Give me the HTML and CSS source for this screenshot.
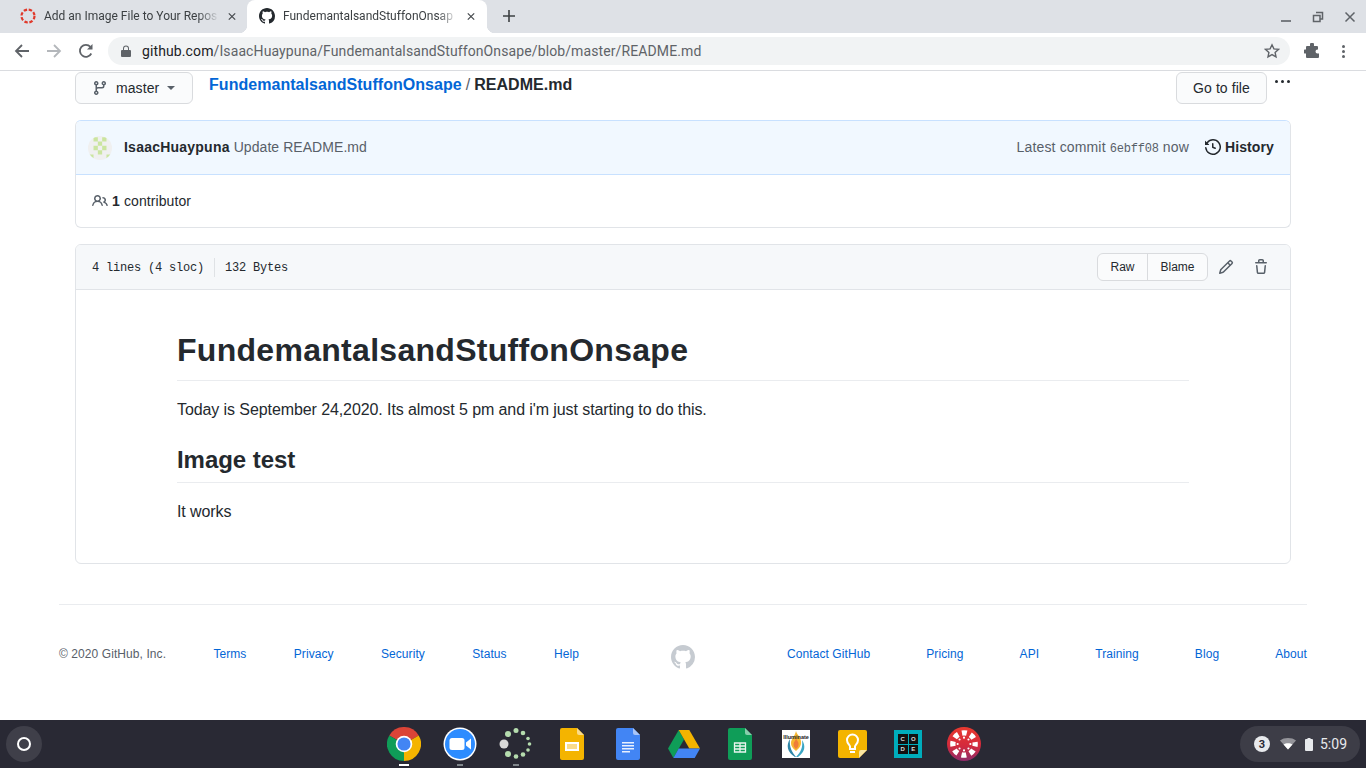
FILE: index.html
```html
<!DOCTYPE html>
<html lang="en">
<head>
    <meta charset="UTF-8">
    <title>FundemantalsandStuffonOnsape/README.md</title>
    <link rel="stylesheet" href="styles.css">
</head>
<body>
    <div class="tabstrip">
        <div class="tab">
            <svg class="favicon" viewBox="0 0 16 16"><circle cx="8" cy="8" r="6.5" fill="none" stroke="#e0392b" stroke-width="2.2" stroke-dasharray="3.4 1.7"/></svg>
            <span class="tab-title">Add an Image File to Your Repos</span>
            <svg class="tab-close" viewBox="0 0 10 10"><path d="M1 1l8 8M9 1l-8 8"/></svg>
        </div>
        <div class="tab tab-active">
            <svg class="favicon" viewBox="0 0 16 16"><path fill="#24292e" d="M8 0C3.58 0 0 3.58 0 8c0 3.54 2.29 6.53 5.47 7.59.4.07.55-.17.55-.38 0-.19-.01-.82-.01-1.49-2.01.37-2.53-.49-2.69-.94-.09-.23-.48-.94-.82-1.13-.28-.15-.68-.52-.01-.53.63-.01 1.08.58 1.23.82.72 1.21 1.87.87 2.33.66.07-.52.28-.87.51-1.07-1.78-.2-3.64-.89-3.64-3.95 0-.87.31-1.59.82-2.15-.08-.2-.36-1.02.08-2.12 0 0 .67-.21 2.2.82.64-.18 1.32-.27 2-.27.68 0 1.36.09 2 .27 1.53-1.04 2.2-.82 2.2-.82.44 1.1.16 1.92.08 2.12.51.56.82 1.27.82 2.15 0 3.07-1.87 3.75-3.65 3.95.29.25.54.73.54 1.48 0 1.07-.01 1.93-.01 2.2 0 .21.15.46.55.38A8.013 8.013 0 0016 8c0-4.42-3.58-8-8-8z"/></svg>
            <span class="tab-title">FundemantalsandStuffonOnsap</span>
            <svg class="tab-close" viewBox="0 0 10 10"><path d="M1 1l8 8M9 1l-8 8"/></svg>
        </div>
        <svg class="new-tab" viewBox="0 0 12 12"><path d="M6 0v12M0 6h12"/></svg>
        <div class="window-controls">
            <svg viewBox="0 0 12 12"><path d="M1 10h10" stroke-width="1.6"/></svg>
            <svg viewBox="0 0 12 12"><path d="M4 1.5h6.5V8H8M1.5 4.5H8V10.5H1.5Z" stroke-width="1.5"/></svg>
            <svg viewBox="0 0 12 12"><path d="M1.5 1.5l9 9M10.5 1.5l-9 9" stroke-width="1.5"/></svg>
        </div>
    </div>

    <div class="toolbar">
        <svg class="nav-icon" viewBox="0 0 16 16"><path d="M15 8H2M8 2L2 8l6 6" fill="none" stroke="#5f6368" stroke-width="1.8"/></svg>
        <svg class="nav-icon" viewBox="0 0 16 16"><path d="M1 8h13M8 2l6 6-6 6" fill="none" stroke="#b4b7bb" stroke-width="1.8"/></svg>
        <svg class="nav-icon" viewBox="0 0 16 16"><path d="M13.3 10.5A6 6 0 1 1 12.4 3.8" fill="none" stroke="#5f6368" stroke-width="1.8"/><path d="M14.5 1v5.5H9z" fill="#5f6368"/></svg>
        <div class="omnibox">
            <svg class="lock" viewBox="0 0 10 12"><path fill="#5f6368" d="M1 5h1V3.5a3 3 0 0 1 6 0V5h1a1 1 0 0 1 1 1v5a1 1 0 0 1-1 1H1a1 1 0 0 1-1-1V6a1 1 0 0 1 1-1zm2 0h4V3.5a2 2 0 0 0-4 0z"/></svg>
            <span class="url"><span class="url-host">github.com</span>/IsaacHuaypuna/FundemantalsandStuffonOnsape/blob/master/README.md</span>
            <svg class="star" viewBox="0 0 16 16"><path d="M8 1.8l1.9 4.1 4.5.5-3.3 3 .9 4.4L8 11.6l-4 2.2.9-4.4-3.3-3 4.5-.5z" fill="none" stroke="#5f6368" stroke-width="1.4"/></svg>
        </div>
        <svg class="ext" viewBox="0 0 16 16"><path fill="#5f6368" d="M6 1.5a2 2 0 0 1 4 0V3h3a1 1 0 0 1 1 1v2.5h-.5a2 2 0 0 0 0 4H15V14a1 1 0 0 1-1 1H3a1 1 0 0 1-1-1v-3.5H1a2 2 0 0 1 0-4h1V4a1 1 0 0 1 1-1h3z"/></svg>
        <div class="kebab"><i></i><i></i><i></i></div>
    </div>

    <main class="page">
        <div class="file-nav">
            <button class="btn branch-btn">
                <svg class="octicon" viewBox="0 0 16 16"><path fill-rule="evenodd" d="M11.75 2.5a.75.75 0 100 1.5.75.75 0 000-1.5zm-2.25.75a2.25 2.25 0 113 2.122V6A2.5 2.5 0 0110 8.5H6a1 1 0 00-1 1v1.128a2.251 2.251 0 11-1.5 0V5.372a2.25 2.25 0 111.5 0v1.836A2.492 2.492 0 016 7h4a1 1 0 001-1v-.628A2.25 2.25 0 019.5 3.25zM4.25 12a.75.75 0 100 1.5.75.75 0 000-1.5zM3.5 3.25a.75.75 0 111.5 0 .75.75 0 01-1.5 0z"/></svg>
                <span>master</span>
                <i class="caret"></i>
            </button>
            <div class="breadcrumb"><a href="#">FundemantalsandStuffonOnsape</a><span class="sep">/</span><strong>README.md</strong></div>
            <button class="btn goto-btn">Go to file</button>
            <div class="more-dots"><i></i><i></i><i></i></div>
        </div>

        <section class="commit-box">
            <div class="commit-head">
                <svg class="avatar" viewBox="0 0 10 10">
                    <rect width="10" height="10" fill="#f0f0f0"/>
                    <path fill="#cbe5a0" d="M2.3.5h1.8v1.8H2.3zM5.9.5h1.8v1.8H5.9zM4.1 2.3h1.8v1.8H4.1zM2.3 4.1h1.8v1.8H2.3zM5.9 4.1h1.8v1.8H5.9zM4.1 5.9h1.8v1.8H4.1zM.5 7.7h1.8v1.8H.5zM7.7 7.7h1.8v1.8H7.7z"/>
                </svg>
                <span class="commit-author">IsaacHuaypuna</span>
                <span class="commit-msg">Update README.md</span>
                <span class="commit-meta">Latest commit <code>6ebff08</code> now</span>
                <span class="history">
                    <svg class="octicon" viewBox="0 0 16 16"><path fill-rule="evenodd" d="M1.643 3.143L.427 1.927A.25.25 0 000 2.104V5.75c0 .138.112.25.25.25h3.646a.25.25 0 00.177-.427L2.715 4.215a6.5 6.5 0 11-1.18 4.458.75.75 0 10-1.493.154 8.001 8.001 0 101.6-5.684zM7.75 4a.75.75 0 01.75.75v2.992l2.028.812a.75.75 0 01-.557 1.392l-2.5-1A.75.75 0 017 8.25v-3.5A.75.75 0 017.75 4z"/></svg>
                    History
                </span>
            </div>
            <div class="contributors">
                <svg class="octicon" viewBox="0 0 16 16"><path fill-rule="evenodd" d="M5.5 3.5a2 2 0 100 4 2 2 0 000-4zM2 5.5a3.5 3.5 0 115.898 2.549 5.507 5.507 0 013.034 4.084.75.75 0 11-1.482.235 4.001 4.001 0 00-7.9 0 .75.75 0 01-1.482-.236A5.507 5.507 0 013.102 8.05 3.49 3.49 0 012 5.5zM11 4a.75.75 0 100 1.5 1.5 1.5 0 01.666 2.844.75.75 0 00-.416.672v.352a.75.75 0 00.574.73c1.2.289 2.162 1.2 2.522 2.372a.75.75 0 101.434-.44 5.01 5.01 0 00-2.56-3.012A3 3 0 0011 4z"/></svg>
                <strong>1</strong> contributor
            </div>
        </section>

        <section class="blob-box">
            <div class="blob-head">
                <span class="blob-info">4 lines (4 sloc)</span>
                <span class="blob-info blob-size">132 Bytes</span>
                <div class="btn-group">
                    <button class="btn-small btn-raw">Raw</button>
                    <button class="btn-small btn-blame">Blame</button>
                </div>
                <svg class="octicon edit-icon" viewBox="0 0 16 16"><path fill-rule="evenodd" d="M11.013 1.427a1.75 1.75 0 012.474 0l1.086 1.086a1.75 1.75 0 010 2.474l-8.61 8.61c-.21.21-.47.364-.756.445l-3.251.93a.75.75 0 01-.927-.928l.929-3.25a1.75 1.75 0 01.445-.758l8.61-8.61zm1.414 1.06a.25.25 0 00-.354 0L10.811 3.75l1.439 1.44 1.263-1.263a.25.25 0 000-.354l-1.086-1.086zM11.189 6.25L9.75 4.81l-6.286 6.287a.25.25 0 00-.064.108l-.558 1.953 1.953-.558a.249.249 0 00.108-.064l6.286-6.286z"/></svg>
                <svg class="octicon trash-icon" viewBox="0 0 16 16"><path fill-rule="evenodd" d="M6.5 1.75a.25.25 0 01.25-.25h2.5a.25.25 0 01.25.25V3h-3V1.75zm4.5 0V3h2.25a.75.75 0 010 1.5H2.75a.75.75 0 010-1.5H5V1.75C5 .784 5.784 0 6.75 0h2.5C10.216 0 11 .784 11 1.75zM4.496 6.675a.75.75 0 10-1.492.15l.66 6.6A1.75 1.75 0 005.405 15h5.19c.9 0 1.652-.681 1.741-1.576l.66-6.6a.75.75 0 00-1.492-.149l-.66 6.6a.25.25 0 01-.249.225h-5.19a.25.25 0 01-.249-.225l-.66-6.6z"/></svg>
            </div>
            <article class="markdown">
                <h1>FundemantalsandStuffonOnsape</h1>
                <p>Today is September 24,2020. Its almost 5 pm and i'm just starting to do this.</p>
                <h2>Image test</h2>
                <p>It works</p>
            </article>
        </section>

        <footer class="site-footer">
            <div class="footer-links">
                <span>© 2020 GitHub, Inc.</span>
                <a href="#">Terms</a>
                <a href="#">Privacy</a>
                <a href="#">Security</a>
                <a href="#">Status</a>
                <a href="#">Help</a>
            </div>
            <svg class="footer-logo" viewBox="0 0 16 16"><path fill="#c6cbd1" d="M8 0C3.58 0 0 3.58 0 8c0 3.54 2.29 6.53 5.47 7.59.4.07.55-.17.55-.38 0-.19-.01-.82-.01-1.49-2.01.37-2.53-.49-2.69-.94-.09-.23-.48-.94-.82-1.13-.28-.15-.68-.52-.01-.53.63-.01 1.08.58 1.23.82.72 1.21 1.87.87 2.33.66.07-.52.28-.87.51-1.07-1.78-.2-3.64-.89-3.64-3.95 0-.87.31-1.59.82-2.15-.08-.2-.36-1.02.08-2.12 0 0 .67-.21 2.2.82.64-.18 1.32-.27 2-.27.68 0 1.36.09 2 .27 1.53-1.04 2.2-.82 2.2-.82.44 1.1.16 1.92.08 2.12.51.56.82 1.27.82 2.15 0 3.07-1.87 3.75-3.65 3.95.29.25.54.73.54 1.48 0 1.07-.01 1.93-.01 2.2 0 .21.15.46.55.38A8.013 8.013 0 0016 8c0-4.42-3.58-8-8-8z"/></svg>
            <div class="footer-links">
                <a href="#">Contact GitHub</a>
                <a href="#">Pricing</a>
                <a href="#">API</a>
                <a href="#">Training</a>
                <a href="#">Blog</a>
                <a href="#">About</a>
            </div>
        </footer>
    </main>

    <div class="shelf">
        <div class="launcher"><i></i></div>
        <div class="shelf-apps">
            <div class="app app-open">
                <svg viewBox="0 0 32 32" class="ic-34">
                    <path fill="#db4437" d="M16 16L2.14 8A16 16 0 0 1 29.86 8Z"/>
                    <path fill="#f4b400" d="M16 16L29.86 8A16 16 0 0 1 16 32Z"/>
                    <path fill="#0f9d58" d="M16 16L16 32A16 16 0 0 1 2.14 8Z"/>
                    <circle cx="16" cy="16" r="7.8" fill="#fff"/>
                    <circle cx="16" cy="16" r="6.2" fill="#4285f4"/>
                </svg>
            </div>
            <div class="app app-running">
                <svg viewBox="0 0 34 34" class="ic-34">
                    <circle cx="17" cy="17" r="16.5" fill="#fff"/>
                    <circle cx="17" cy="17" r="15" fill="#2d8cff"/>
                    <rect x="6.5" y="11" width="15" height="12" rx="2.5" fill="#fff"/>
                    <path fill="#fff" d="M23 15.5l5-4v11l-5-4z"/>
                </svg>
            </div>
            <div class="app app-running">
                <svg viewBox="0 0 34 34" class="ic-34">
                    <circle cx="5" cy="17" r="4.5" fill="#d8d8d8"/>
                    <circle cx="9" cy="7" r="3" fill="#b5dcae"/><circle cx="17" cy="3.5" r="2.5" fill="#b5dcae"/>
                    <circle cx="24" cy="6" r="2.3" fill="#b5dcae"/><circle cx="29" cy="11.5" r="1.8" fill="#b5dcae"/>
                    <circle cx="30.5" cy="17" r="1.8" fill="#b5dcae"/><circle cx="29" cy="23" r="1.8" fill="#b5dcae"/>
                    <circle cx="24" cy="27.5" r="2.3" fill="#b5dcae"/><circle cx="17" cy="29.5" r="2.3" fill="#b5dcae"/>
                    <circle cx="9" cy="27" r="3" fill="#b5dcae"/>
                </svg>
            </div>
            <div class="app">
                <svg viewBox="0 0 24 32" class="ic-doc">
                    <path fill="#f4b400" d="M2 0h15l7 7v23a2 2 0 0 1-2 2H2a2 2 0 0 1-2-2V2a2 2 0 0 1 2-2z"/>
                    <path fill="#fadb8a" d="M17 0l7 7h-5a2 2 0 0 1-2-2z"/>
                    <path fill="#fadb8a" stroke="#fff" stroke-width="2" d="M6 15h12v7H6z"/>
                </svg>
            </div>
            <div class="app">
                <svg viewBox="0 0 24 32" class="ic-doc">
                    <path fill="#4285f4" d="M2 0h15l7 7v23a2 2 0 0 1-2 2H2a2 2 0 0 1-2-2V2a2 2 0 0 1 2-2z"/>
                    <path fill="#a9c5f8" d="M17 0l7 7h-5a2 2 0 0 1-2-2z"/>
                    <path fill="#e8f0fe" d="M6 14h12v1.5H6zM6 17h12v1.5H6zM6 20h12v1.5H6zM6 23h8v1.5H6z"/>
                </svg>
            </div>
            <div class="app">
                <svg viewBox="0 0 32 28" class="ic-drive">
                    <path fill="#0f9d58" d="M10.7 0L0 18.5 5.4 28 16 9.5z"/>
                    <path fill="#f4b400" d="M10.7 0h10.6L32 18.5H21.3z"/>
                    <path fill="#4285f4" d="M5.4 28L10.7 18.5H32L26.7 28z"/>
                </svg>
            </div>
            <div class="app">
                <svg viewBox="0 0 24 32" class="ic-doc">
                    <path fill="#0f9d58" d="M2 0h15l7 7v23a2 2 0 0 1-2 2H2a2 2 0 0 1-2-2V2a2 2 0 0 1 2-2z"/>
                    <path fill="#87ceac" d="M17 0l7 7h-5a2 2 0 0 1-2-2z"/>
                    <path fill="none" stroke="#e8f5ee" stroke-width="1.3" d="M6.5 15h11v9h-11zM6.5 18h11M6.5 21h11M12 15v9"/>
                </svg>
            </div>
            <div class="app">
                <div class="illuminate">
                    <svg viewBox="0 0 28 28">
                        <path fill="#f7b733" d="M14 1c1 4 6 7 5 13-.5 3-3 5-5 7-2-2-5-4-5-8 0-4 4-7 5-12z"/>
                        <path fill="#ef7d3a" d="M14 8c1 3 3 4 2.5 7-.3 2-1.5 3-2.5 4-1-1-2.5-2-2.5-4.5 0-2.5 2-3.5 2.5-6.5z"/>
                        <path fill="#2f86a8" d="M8 9c-4 6-3 13 5 18h1c-4-5-7-10-6-18z"/>
                        <path fill="#3aa6c4" d="M20 10c4 6 3 12-4 17h-2c5-5 7-10 6-17z"/>
                    </svg>
                    <span>Illuminate</span>
                </div>
            </div>
            <div class="app">
                <svg viewBox="0 0 29 28" class="ic-keep">
                    <path fill="#f4b400" d="M2 0h25a2 2 0 0 1 2 2v18l-8 8H2a2 2 0 0 1-2-2V2a2 2 0 0 1 2-2z"/>
                    <path fill="#fbe6a2" d="M29 20h-6a2 2 0 0 0-2 2v6z"/>
                    <path fill="none" stroke="#fff" stroke-width="2" d="M12 19v-2.5c0-1.5-3-3-3-6.5a5.5 5.5 0 0 1 11 0c0 3.5-3 5-3 6.5V19zM12 22h5"/>
                </svg>
            </div>
            <div class="app">
                <div class="code-logo"><span>C</span><span>O</span><span>D</span><span>E</span></div>
            </div>
            <div class="app">
                <svg viewBox="0 0 32 32" class="ic-34">
                    <defs><linearGradient id="canvas-grad" x1="0" y1="0" x2="0" y2="1"><stop offset="0" stop-color="#e8392f"/><stop offset="0.55" stop-color="#d42a3c"/><stop offset="1" stop-color="#8e2a6a"/></linearGradient></defs>
                    <circle cx="16" cy="16" r="16" fill="url(#canvas-grad)"/>
                    <circle cx="16" cy="16" r="10.5" fill="none" stroke="#fff" stroke-width="5" stroke-dasharray="4.6 3.65" stroke-dashoffset="2.3"/>
                    <g fill="#fff">
                        <circle cx="16" cy="10" r="1"/><circle cx="16" cy="22" r="1"/><circle cx="10" cy="16" r="1"/><circle cx="22" cy="16" r="1"/>
                        <circle cx="11.8" cy="11.8" r="1"/><circle cx="20.2" cy="11.8" r="1"/><circle cx="11.8" cy="20.2" r="1"/><circle cx="20.2" cy="20.2" r="1"/>
                    </g>
                </svg>
            </div>
        </div>
        <div class="status-tray">
            <span class="badge">3</span>
            <svg class="wifi" viewBox="0 0 16 12"><path fill="#fff" d="M8 11.5L0 2.5C4-.8 12-.8 16 2.5z" opacity=".45"/><path fill="#fff" d="M8 11.5L3.5 6.5c2.5-1.8 6.5-1.8 9 0z"/></svg>
            <svg class="battery" viewBox="0 0 8 13"><path fill="#e8eaed" d="M2.5 0h3v1H7a1 1 0 0 1 1 1v10a1 1 0 0 1-1 1H1a1 1 0 0 1-1-1V2a1 1 0 0 1 1-1h1.5z"/></svg>
            <span class="clock">5:09</span>
        </div>
    </div>
</body>
</html>
```

FILE: styles.css
```css
* {
    box-sizing: border-box;
}
body {
    display: flex;
    flex-direction: column;
    height: 100vh;
    margin: 0;
    overflow: hidden;
    background-color: #fff;
    color: #24292e;
    font-family: "Liberation Sans", Arial, sans-serif;
    font-size: 14px;
}
a {
    color: #0366d6;
    text-decoration: none;
}
button {
    font-family: inherit;
}
.octicon {
    width: 16px;
    height: 16px;
    flex: none;
    fill: currentColor;
}

/* browser chrome */
.tabstrip {
    display: flex;
    align-items: center;
    flex: none;
    height: 33px;
    padding-left: 8px;
    background-color: #dee1e6;
    font-family: Roboto, sans-serif;
    font-size: 12px;
    color: #3c4043;
}
.tab {
    position: relative;
    display: flex;
    align-items: center;
    width: 240px;
    height: 33px;
    padding: 0 12px 1px;
}
.tab-active {
    margin-left: -1px;
    background-color: #fff;
    border-radius: 8px 8px 0 0;
}
.tab-active::before,
.tab-active::after {
    content: "";
    position: absolute;
    bottom: 0;
    width: 8px;
    height: 8px;
}
.tab-active::before {
    left: -8px;
    background: radial-gradient(circle at 0 0, transparent 8px, #fff 8.5px);
}
.tab-active::after {
    right: -8px;
    background: radial-gradient(circle at 100% 0, transparent 8px, #fff 8.5px);
}
.favicon {
    width: 16px;
    height: 16px;
    flex: none;
    margin-right: 8px;
}
.tab-title {
    flex: none;
    width: 175px;
    overflow: hidden;
    white-space: nowrap;
    -webkit-mask-image: linear-gradient(to right, #000 88%, transparent 100%);
    mask-image: linear-gradient(to right, #000 88%, transparent 100%);
}
.tab-close {
    width: 9px;
    height: 9px;
    margin-left: 9px;
    fill: none;
    stroke: #45494d;
    stroke-width: 1.5;
}
.new-tab {
    width: 12px;
    height: 12px;
    margin: 0 0 2px 16px;
    fill: none;
    stroke: #3c4043;
    stroke-width: 1.6;
}
.window-controls {
    display: flex;
    gap: 20px;
    margin-left: auto;
    padding-right: 10px;
}
.window-controls svg {
    width: 12px;
    height: 12px;
    fill: none;
    stroke: #5f6368;
}
.toolbar {
    display: flex;
    align-items: center;
    flex: none;
    height: 38px;
    padding: 0 0 1px 14px;
    background-color: #fff;
    border-bottom: 1px solid #dadce0;
}
.nav-icon {
    width: 16px;
    height: 16px;
    margin-right: 16px;
}
.omnibox {
    display: flex;
    align-items: center;
    width: 1182px;
    height: 28px;
    margin-left: -2px;
    padding: 0 10px 0 13px;
    background-color: #f1f3f4;
    border-radius: 14px;
    font-family: Roboto, sans-serif;
    font-size: 14px;
    color: #5f6368;
}
.lock {
    width: 10px;
    height: 12px;
    margin-right: 11px;
}
.url {
    letter-spacing: 0.11px;
}
.url-host {
    color: #202124;
}
.star {
    width: 16px;
    height: 16px;
    margin-left: auto;
}
.ext {
    width: 16px;
    height: 16px;
    margin-left: 14px;
}
.kebab {
    display: flex;
    flex-direction: column;
    gap: 2px;
    margin-left: 22px;
}
.kebab i {
    width: 3px;
    height: 3px;
    border-radius: 50%;
    background-color: #5f6368;
}

/* github page */
.page {
    flex: 1;
    min-height: 0;
    padding: 1px 75px 0;
    overflow: hidden;
}
.file-nav {
    display: flex;
    align-items: flex-start;
    height: 32px;
    margin-bottom: 16px;
}
.btn {
    height: 32px;
    padding: 0 16px;
    background-color: #fafbfc;
    border: 1px solid #d9dbde;
    border-radius: 6px;
    color: #24292e;
    font-size: 14px;
    letter-spacing: 0.08px;
}
.branch-btn {
    display: flex;
    align-items: center;
    width: 118px;
}
.branch-btn .octicon {
    color: #586069;
    margin-right: 8px;
}
.caret {
    margin-left: 8px;
    border: 4px solid transparent;
    border-top-color: #586069;
    border-bottom: 0;
}
.breadcrumb {
    margin: 1px 0 0 16px;
    font-size: 16px;
    line-height: 24px;
    font-weight: 600;
    letter-spacing: 0.04px;
}
.sep {
    margin: 0 4px;
    font-weight: 400;
    color: #586069;
}
.goto-btn {
    margin-left: auto;
    width: 91px;
    padding: 0;
}
.more-dots {
    display: flex;
    gap: 3px;
    width: 24px;
    margin-top: 8px;
    padding-left: 8px;
}
.more-dots i {
    width: 3px;
    height: 3px;
    border-radius: 50%;
    background-color: #24292e;
}
.commit-box {
    height: 108px;
    margin-bottom: 16px;
    border: 1px solid #e1e4e8;
    border-top-color: #c8e1ff;
    border-radius: 6px;
    overflow: hidden;
}
.commit-head {
    display: flex;
    align-items: center;
    height: 54px;
    padding: 0 16px 1px 12px;
    background-color: #f1f8ff;
    border-bottom: 1px solid #c8e1ff;
}
.avatar {
    width: 24px;
    height: 24px;
    margin: 2px 12px 0 0;
    border-radius: 50%;
}
.commit-author {
    font-weight: 700;
    letter-spacing: 0.23px;
}
.commit-msg {
    margin-left: 4px;
    color: #586069;
    letter-spacing: 0.06px;
}
.commit-meta {
    margin-left: auto;
    color: #586069;
    letter-spacing: 0.15px;
}
.commit-meta code {
    font-family: "Liberation Mono", monospace;
    font-size: 12px;
    letter-spacing: -0.2px;
}
.history {
    display: flex;
    align-items: center;
    gap: 4px;
    margin-left: 16px;
    font-weight: 700;
    letter-spacing: 0.12px;
}
.contributors {
    display: flex;
    align-items: center;
    height: 52px;
    padding-left: 16px;
    letter-spacing: 0.1px;
}
.contributors .octicon {
    margin-right: 4px;
    color: #586069;
}
.contributors strong {
    margin-right: 4px;
}
.blob-box {
    border: 1px solid #e1e4e8;
    border-radius: 6px;
    overflow: hidden;
}
.blob-head {
    display: flex;
    align-items: center;
    height: 45px;
    padding-left: 16px;
    background-color: #f6f8fa;
    border-bottom: 1px solid #e1e4e8;
}
.blob-info {
    font-family: "Liberation Mono", monospace;
    font-size: 12px;
    line-height: 18px;
    letter-spacing: -0.2px;
    padding-top: 1px;
}
.blob-size {
    margin-left: 10px;
    padding-left: 10px;
    border-left: 1px solid #dfe2e5;
}
.btn-group {
    display: flex;
    margin-left: auto;
    height: 28px;
    background-color: #fafbfc;
    border: 1px solid #d9dbde;
    border-radius: 6px;
}
.btn-small {
    padding: 0;
    background: none;
    border: 0;
    color: #24292e;
    font-size: 12px;
}
.btn-raw {
    width: 49px;
}
.btn-blame {
    width: 60px;
    border-left: 1px solid #d9dbde;
}
.edit-icon {
    margin-left: 10px;
    color: #586069;
}
.trash-icon {
    margin-left: 19px;
    margin-right: 21px;
    color: #586069;
}
.markdown {
    padding: 40px 101px 39px;
    font-size: 16px;
    line-height: 24px;
}
.markdown h1 {
    margin: 0 0 16px;
    padding-bottom: 10px;
    border-bottom: 1px solid #eaecef;
    font-size: 32px;
    line-height: 40px;
    letter-spacing: 0.29px;
}
.markdown h2 {
    margin: 23px 0 16px;
    padding-bottom: 7px;
    border-bottom: 1px solid #eaecef;
    font-size: 24px;
    line-height: 30px;
    letter-spacing: -0.05px;
}
.markdown p {
    margin: 0 0 15px;
    padding-top: 1px;
    letter-spacing: -0.09px;
}
.markdown p:last-child {
    margin-bottom: 0;
}
.site-footer {
    display: grid;
    grid-template-columns: 520px 1fr 520px;
    align-items: flex-start;
    margin: 40px -16px 0;
    padding-top: 40px;
    border-top: 1px solid #eaecef;
    font-size: 12px;
    color: #586069;
}
.footer-links {
    display: flex;
    justify-content: space-between;
    padding-top: 2px;
    letter-spacing: 0.08px;
}
.footer-logo {
    justify-self: center;
    width: 24px;
    height: 24px;
}

/* chromeos shelf */
.shelf {
    position: relative;
    display: flex;
    align-items: center;
    justify-content: center;
    flex: none;
    height: 48px;
    background-color: #292934;
}
.launcher {
    position: absolute;
    left: 6px;
    top: 6px;
    display: flex;
    align-items: center;
    justify-content: center;
    width: 36px;
    height: 36px;
    border-radius: 50%;
    background-color: #3f3f49;
}
.launcher i {
    width: 14px;
    height: 14px;
    border: 2px solid #fff;
    border-radius: 50%;
}
.shelf-apps {
    display: flex;
    padding-left: 2px;
}
.app {
    position: relative;
    display: flex;
    align-items: center;
    justify-content: center;
    width: 56px;
    height: 48px;
}
.app-open::after,
.app-running::after {
    content: "";
    position: absolute;
    left: 50%;
    bottom: 2px;
    width: 6px;
    height: 2px;
    margin-left: -3px;
    background-color: #80868b;
}
.app-open::after {
    width: 10px;
    margin-left: -5px;
    background-color: #fff;
}
.ic-34 {
    width: 34px;
    height: 34px;
}
.ic-doc {
    width: 24px;
    height: 32px;
}
.ic-drive {
    width: 32px;
    height: 28px;
}
.ic-keep {
    width: 29px;
    height: 28px;
}
.illuminate {
    position: relative;
    width: 28px;
    height: 28px;
    background-color: #fff;
}
.illuminate svg {
    display: block;
    width: 28px;
    height: 28px;
}
.illuminate span {
    position: absolute;
    left: 0;
    right: 0;
    top: 4px;
    text-align: center;
    font-size: 5.5px;
    line-height: 6px;
    font-weight: 700;
    color: #222;
}
.code-logo {
    display: grid;
    grid-template-columns: 1fr 1fr;
    grid-template-rows: 1fr 1fr;
    gap: 1px;
    width: 28px;
    height: 28px;
    padding: 4px;
    background-color: #00adbc;
}
.code-logo span {
    display: flex;
    align-items: center;
    justify-content: center;
    background-color: #111;
    color: #ddd;
    font-size: 6px;
    font-weight: 700;
}
.status-tray {
    position: absolute;
    right: 6px;
    top: 6px;
    display: flex;
    align-items: center;
    width: 120px;
    height: 36px;
    padding-left: 14px;
    border-radius: 18px;
    background-color: #3d3d47;
    font-family: Roboto, sans-serif;
    color: #e8eaed;
}
.badge {
    display: flex;
    align-items: center;
    justify-content: center;
    width: 16px;
    height: 16px;
    border-radius: 50%;
    background-color: #e8eaed;
    color: #292934;
    font-size: 11px;
    font-weight: 700;
}
.wifi {
    width: 16px;
    height: 12px;
    margin-left: 10px;
}
.battery {
    width: 8px;
    height: 13px;
    margin-left: 9px;
}
.clock {
    margin-left: 7px;
    font-size: 14px;
}
```
